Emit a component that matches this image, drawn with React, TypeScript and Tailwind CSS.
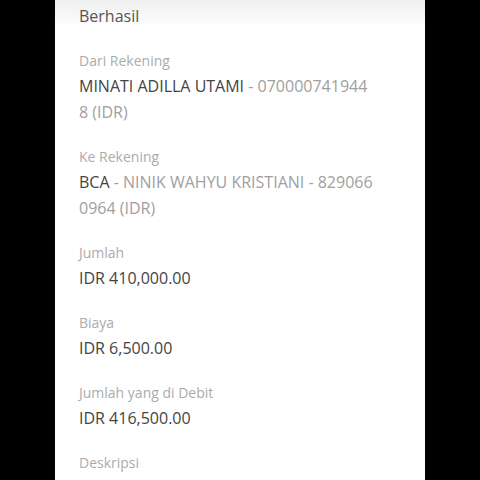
const rows: { label: string; main?: string; rest?: string }[] = [
  { label: "Dari Rekening", main: "MINATI ADILLA UTAMI", rest: " - 0700007419448 (IDR)" },
  { label: "Ke Rekening", main: "BCA", rest: " - NINIK WAHYU KRISTIANI - 8290660964 (IDR)" },
  { label: "Jumlah", main: "IDR 410,000.00" },
  { label: "Biaya", main: "IDR 6,500.00" },
  { label: "Jumlah yang di Debit", main: "IDR 416,500.00" },
  { label: "Deskripsi", main: "Transfer" },
];

export default function App() {
  return (
    <div className="w-[480px] h-[480px] bg-black flex justify-center overflow-hidden font-['Open_Sans',sans-serif]">
      <div className="w-[370px] h-full bg-white flex flex-col">
        <div className="bg-gradient-to-b from-[#efefef] to-white h-[34px] px-6 pt-[4px]">
          <div className="text-[16px] leading-[24px] text-[#555]">Berhasil</div>
        </div>
        <div className="flex flex-col gap-5 px-6 pt-[21px]">
          {rows.map((r) => (
            <div key={r.label} className="flex flex-col">
              <div className="text-[14px] leading-[24px] text-[#ababab]">{r.label}</div>
              <div className="w-[296px] break-all text-[16px] leading-[26px] text-[#444]">
                {r.main}
                {r.rest && <span className="text-[#a0a0a0]">{r.rest}</span>}
              </div>
            </div>
          ))}
        </div>
      </div>
    </div>
  );
}
